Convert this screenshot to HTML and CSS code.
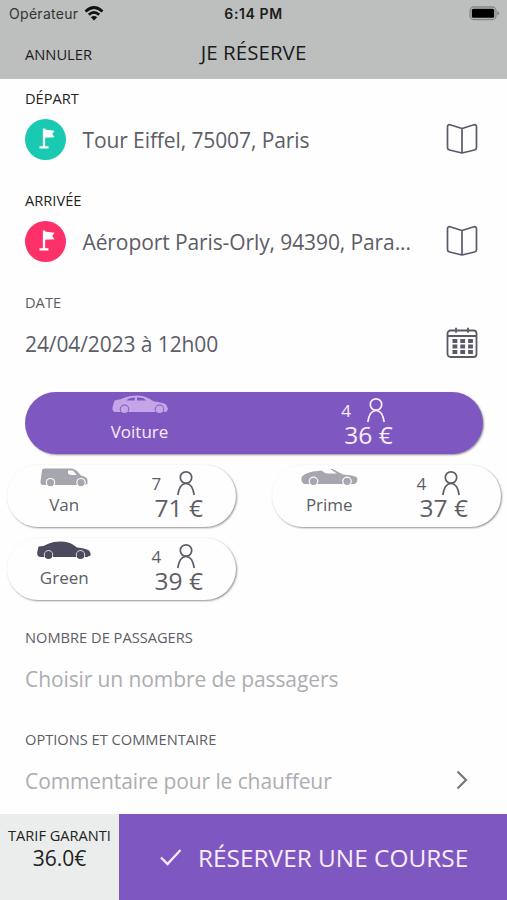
FILE: index.html
```html
<!DOCTYPE html>
<html lang="fr">
<head>
<meta charset="utf-8">
<title>Je réserve</title>
<link rel="stylesheet" href="styles.css">
</head>
<body>
<svg class="defs" width="0" height="0">
  <symbol id="flag" viewBox="0 0 40 40"><path d="M18 9.500v18.500M13.500 28.300h9" stroke="#fff" stroke-width="2.300" fill="none"/><path d="M18.500 10.500l10 1.200-2.300 3.300 2.300 3.300-10 .5z" fill="#fff"/></symbol>
  <symbol id="book" viewBox="0 0 32 32"><path d="M16 5.500 4 1.800Q1.500 1.300 1.500 3.800V24.500q0 2 2 2.500L16 30l12.500-3q2-.5 2-2.500V3.800Q30.500 1.300 28 1.800zV30" fill="none" stroke="currentColor" stroke-width="1.700" stroke-linejoin="round"/></symbol>
  <symbol id="person" viewBox="0 0 20 26"><circle cx="10" cy="7.500" r="5.700"/><path d="M1.800 25C3 17 6 13.500 10 13.500S17 17 18.200 25"/></symbol>
  <symbol id="sedan" viewBox="0 0 56 19"><path fill="currentColor" fill-rule="evenodd" d="M2.500 5.500Q9 4.500 13 2.500Q17 .5 26 .5Q32 .5 36 3L42 6.500Q51 7.500 54 9.500Q55 12 56 13.500L55 16.500 52 17H3Q0 16.500 .5 12.500L1.500 9zM14.500 5.500h8l.5-3q-4 0-7 1.500zM25 5.500h9l-2.500-2.200q-2-.8-6.500-.8z"/><circle class="gap" cx="12.500" cy="14.300" r="4.700"/><circle fill="currentColor" cx="12.500" cy="14.300" r="3.800"/><circle class="gap" cx="47.500" cy="14.300" r="4.700"/><circle fill="currentColor" cx="47.500" cy="14.300" r="3.800"/></symbol>
  <symbol id="green" viewBox="0 0 54 19"><path fill="currentColor" d="M1.500 5.500Q8 5 12 2.500Q16 .5 24 .5Q31 .5 35 3L40 6.500Q49 7.500 52 9.500Q54 12 53.500 14.500L50 16H3Q-.3 15.500 .3 11z"/><circle class="gap" cx="11.500" cy="14" r="4.700"/><circle fill="currentColor" cx="11.500" cy="14" r="3.900"/><circle class="gap" cx="43.500" cy="14" r="4.700"/><circle fill="currentColor" cx="43.500" cy="14" r="3.900"/></symbol>
  <symbol id="van" viewBox="0 0 48 19"><path fill="currentColor" fill-rule="evenodd" d="M4 .5H31Q35 .5 38 4L41 7.500Q47 8.500 47.500 12V16L44 17H2L.3 15 2 2.500Q2.500 .5 4 .5zM28 2.500V5.500L30.500 7H36.500L34 3.500Q33 2 30 2.500z"/><circle class="gap" cx="10.500" cy="14.600" r="4.700"/><circle fill="currentColor" cx="10.500" cy="14.600" r="3.600"/><circle class="gap" cx="41" cy="14.600" r="4.700"/><circle fill="currentColor" cx="41" cy="14.600" r="3.600"/></symbol>
  <symbol id="cabrio" viewBox="0 0 57 18"><path fill="currentColor" d="M1 8Q6 3 17 2.500Q21 1 23 4L26 5H36L29.500 .8 31 .3 42 6Q53 6.500 56 9Q57.500 13 54 15.500H3Q-1 13 1 8z"/><circle class="gap" cx="12.500" cy="12.800" r="4.800"/><circle fill="currentColor" cx="12.500" cy="12.800" r="3.600"/><circle class="gap" cx="46" cy="12.800" r="4.800"/><circle fill="currentColor" cx="46" cy="12.800" r="3.600"/></symbol>
</svg>
<div class="screen">
  <header class="header">
    <div class="status">
      <div class="carrier"><span>Opérateur</span>
        <svg width="20" height="15" viewBox="0 0 20 15"><g fill="none" stroke="#111" stroke-width="2.700"><path d="M1.500 5.500Q10-2.500 18.500 5.500"/><path d="M4.800 8.800Q10 4 15.200 8.800"/></g><path d="M10 14.500 6.800 11.200Q10 8.600 13.200 11.200z" fill="#111"/></svg>
      </div>
      <b class="clock">6:14 PM</b>
      <svg class="battery" width="32" height="15" viewBox="0 0 32 15"><rect x="2" y="1" width="26" height="12.500" rx="3.800" fill="none" stroke="#858786" stroke-width="1.300"/><rect x="3.800" y="2.800" width="22.400" height="8.900" rx="1.500" fill="#000"/><path d="M29.300 5q2 .7 2 2.200t-2 2.200z" fill="#858786"/></svg>
    </div>
    <nav class="nav"><span class="cancel">ANNULER</span><h1 class="title">JE RÉSERVE</h1><span></span></nav>
  </header>
  <main class="form">
    <section class="field"><div class="label dark">DÉPART</div>
      <div class="row"><span class="pin teal"><svg width="40" height="40"><use href="#flag"/></svg></span><span class="value">Tour Eiffel, 75007, Paris</span><svg class="book" width="32" height="32"><use href="#book"/></svg></div></section>
    <section class="field"><div class="label dark">ARRIVÉE</div>
      <div class="row"><span class="pin red"><svg width="40" height="40"><use href="#flag"/></svg></span><span class="value">Aéroport Paris-Orly, 94390, Para...</span><svg class="book" width="32" height="32"><use href="#book"/></svg></div></section>
    <section class="field"><div class="label">DATE</div>
      <div class="row"><span class="value">24/04/2023 à 12h00</span>
        <svg class="book" width="32" height="32" viewBox="0 0 32 32"><g fill="none" stroke="currentColor" stroke-width="1.800"><rect x="1.500" y="3.500" width="29" height="26.500" rx="3"/><path d="M1.500 9h29M10 .8v5M22 .8v5"/></g><g stroke="currentColor" stroke-width="3.800" stroke-dasharray="4.800 3"><path d="M6.500 14h20.400M6.500 19.500h20.400M6.500 25h20.400"/></g></svg></div></section>
    <div class="vehicles">
      <div class="pill active"><div class="kind"><svg width="56" height="19"><use href="#sedan"/></svg><span class="name">Voiture</span></div><div class="offer"><div class="seats">4<svg width="20" height="26"><use href="#person"/></svg></div><span class="price">36 €</span></div></div>
      <div class="pill"><div class="kind"><svg width="48" height="19"><use href="#van"/></svg><span class="name">Van</span></div><div class="offer"><div class="seats">7<svg width="20" height="26"><use href="#person"/></svg></div><span class="price">71 €</span></div></div>
      <div class="pill"><div class="kind"><svg width="57" height="18"><use href="#cabrio"/></svg><span class="name">Prime</span></div><div class="offer"><div class="seats">4<svg width="20" height="26"><use href="#person"/></svg></div><span class="price">37 €</span></div></div>
      <div class="pill"><div class="kind solid"><svg width="54" height="19"><use href="#green"/></svg><span class="name">Green</span></div><div class="offer"><div class="seats">4<svg width="20" height="26"><use href="#person"/></svg></div><span class="price">39 €</span></div></div>
    </div>
    <section class="field"><div class="label">NOMBRE DE PASSAGERS</div>
      <div class="row"><span class="value hint">Choisir un nombre de passagers</span></div></section>
    <section class="field"><div class="label">OPTIONS ET COMMENTAIRE</div>
      <div class="row"><span class="value hint">Commentaire pour le chauffeur</span><svg class="chevron" width="12" height="20" viewBox="0 0 12 20"><path d="M1.500 1.500 10 10l-8.500 8.500" fill="none" stroke="#77777c" stroke-width="2.200"/></svg></div></section>
  </main>
  <footer class="footer">
    <div class="fare"><span class="fare-label">TARIF GARANTI</span><span class="fare-value">36.0€</span></div>
    <div class="book-now"><svg width="22" height="18" viewBox="0 0 22 18"><path d="M1 9.500 7.500 16 20.500 2" fill="none" stroke="#f8edff" stroke-width="2.300"/></svg><span>RÉSERVER UNE COURSE</span></div>
  </footer>
</div>
</body>
</html>
```
FILE: styles.css
```css
* { box-sizing: border-box; }
body { margin: 0; background: #fefefe; font-family: "Open Sans", sans-serif; color: #5d5d66; }
.defs { position: absolute; }
svg { display: block; flex: none; }
.screen { width: 507px; height: 900px; display: flex; flex-direction: column; overflow: hidden; }
.header { height: 79px; flex: none; background: #bdbfbe; color: #1b1b1b; }
.status { height: 27px; display: grid; grid-template-columns: 1fr auto 1fr; align-items: center; padding: 0 7px 0 9px; font-family: Inter, sans-serif; font-size: 14px; }
.carrier { display: flex; align-items: center; gap: 6px; letter-spacing: .3px; color: #333; }
.clock { font-weight: 600; letter-spacing: .6px; margin-left: -2px; }
.battery { justify-self: end; }
.nav { height: 52px; display: grid; grid-template-columns: 1fr auto 1fr; align-items: center; padding: 0 25px; }
.cancel { font-size: 14.700px; padding-top: 1px; }
.title { margin: 0; font-size: 20.500px; font-weight: 400; line-height: 48px; padding-bottom: 3px; letter-spacing: .05px; }
.form { height: 735px; flex: none; }
.field { height: 102px; }
.label { height: 40px; line-height: 38px; padding-left: 25px; font-size: 14.650px; white-space: nowrap; }
.dark { color: #222; }
.row { height: 42px; display: flex; align-items: center; padding: 0 29px 0 25px; }
.value { font-size: 21px; letter-spacing: -.1px; line-height: 42px; white-space: nowrap; }
.pin { width: 41px; height: 41px; border-radius: 50%; margin: -2px 16.500px 0 0; display: flex; align-items: center; justify-content: center; }
.teal { background: #19c9b2; }
.red { background: #fd3069; }
.book { margin: -2px 0 0 auto; color: #5a596a; }
.hint { color: #adadb1; }
.chevron { margin: -2px 10px 0 auto; }
.vehicles { height: 233px; padding: 7px 6px 0 7px; display: grid; grid-template-columns: 229px 229px; grid-auto-rows: 61.500px; justify-content: space-between; row-gap: 11.700px; }
.pill { --surface: #fefefe; display: grid; grid-template-columns: 1fr 1fr; border-radius: 31px; background: var(--surface); box-shadow: 1px 1px 2px #777777c8; }
.active { --surface: #7e57c0; grid-column: 1 / -1; margin: 0 18px; color: #f8edff; }
.kind, .offer { display: flex; flex-direction: column; align-items: center; }
.kind { padding-top: 3px; }
.kind svg { color: #a5a6ae; height: 19px; }
.active .kind svg { color: #c5a5e7; }
.kind.solid svg { color: #4c4a5e; }
.gap { fill: var(--surface); }
.name { font-size: 17px; line-height: 24px; margin-top: 6px; }
.offer { padding-top: 5px; }
.seats { display: flex; align-items: center; gap: 15px; height: 26px; margin-right: 10px; font-size: 17px; }
.seats svg { fill: none; stroke: currentColor; stroke-width: 1.700; }
.price { font-size: 24.500px; line-height: 24px; }
.footer { height: 86px; display: flex; }
.fare { width: 119px; background: #eaedeb; color: #222; display: flex; flex-direction: column; align-items: center; padding-top: 11px; white-space: nowrap; }
.fare-label { font-size: 14.600px; line-height: 20px; }
.fare-value { font-size: 21px; line-height: 27px; }
.book-now { flex: 1; background: #7e57c0; color: #f8edff; display: flex; align-items: center; gap: 16px; padding-left: 41px; font-size: 24.400px; white-space: nowrap; }
```
